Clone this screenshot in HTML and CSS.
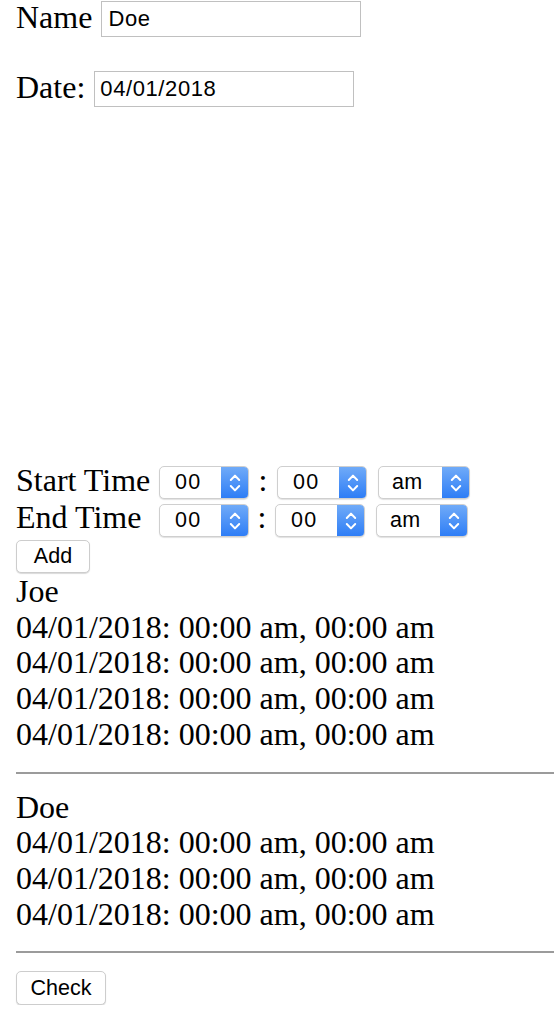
FILE: index.html
```html
<!DOCTYPE html>
<html>
<head>
<meta charset="utf-8">
<link rel="stylesheet" href="styles.css">
</head>
<body>
<div class="page">
  <div class="field name-field">
    <span class="label">Name</span>
    <input class="text-input name-input" type="text" value="Doe">
  </div>
  <div class="field date-field">
    <span class="label">Date:</span>
    <input class="text-input date-input" type="text" value="04/01/2018">
  </div>

  <div class="spacer"></div>

  <div class="time-row start-row">
    <span class="time-label">Start Time</span>
    <div class="select sel-hour"><span class="select-value">00</span><span class="select-arrow"><svg width="28" height="33" viewBox="0 0 28 33"><polyline points="9.8,14 14,9.6 18.2,14" fill="none" stroke="#fff" stroke-width="2" stroke-linecap="round" stroke-linejoin="round"/><polyline points="9.8,20 14,24.4 18.2,20" fill="none" stroke="#fff" stroke-width="2" stroke-linecap="round" stroke-linejoin="round"/></svg></span></div>
    <span class="colon">:</span>
    <div class="select sel-min"><span class="select-value">00</span><span class="select-arrow"><svg width="28" height="33" viewBox="0 0 28 33"><polyline points="9.8,14 14,9.6 18.2,14" fill="none" stroke="#fff" stroke-width="2" stroke-linecap="round" stroke-linejoin="round"/><polyline points="9.8,20 14,24.4 18.2,20" fill="none" stroke="#fff" stroke-width="2" stroke-linecap="round" stroke-linejoin="round"/></svg></span></div>
    <div class="select sel-ampm"><span class="select-value">am</span><span class="select-arrow"><svg width="28" height="33" viewBox="0 0 28 33"><polyline points="9.8,14 14,9.6 18.2,14" fill="none" stroke="#fff" stroke-width="2" stroke-linecap="round" stroke-linejoin="round"/><polyline points="9.8,20 14,24.4 18.2,20" fill="none" stroke="#fff" stroke-width="2" stroke-linecap="round" stroke-linejoin="round"/></svg></span></div>
  </div>
  <div class="time-row end-row">
    <span class="time-label">End Time</span>
    <div class="select sel-hour"><span class="select-value">00</span><span class="select-arrow"><svg width="28" height="33" viewBox="0 0 28 33"><polyline points="9.8,14 14,9.6 18.2,14" fill="none" stroke="#fff" stroke-width="2" stroke-linecap="round" stroke-linejoin="round"/><polyline points="9.8,20 14,24.4 18.2,20" fill="none" stroke="#fff" stroke-width="2" stroke-linecap="round" stroke-linejoin="round"/></svg></span></div>
    <span class="colon end-colon">:</span>
    <div class="select sel-min"><span class="select-value">00</span><span class="select-arrow"><svg width="28" height="33" viewBox="0 0 28 33"><polyline points="9.8,14 14,9.6 18.2,14" fill="none" stroke="#fff" stroke-width="2" stroke-linecap="round" stroke-linejoin="round"/><polyline points="9.8,20 14,24.4 18.2,20" fill="none" stroke="#fff" stroke-width="2" stroke-linecap="round" stroke-linejoin="round"/></svg></span></div>
    <div class="select sel-ampm"><span class="select-value">am</span><span class="select-arrow"><svg width="28" height="33" viewBox="0 0 28 33"><polyline points="9.8,14 14,9.6 18.2,14" fill="none" stroke="#fff" stroke-width="2" stroke-linecap="round" stroke-linejoin="round"/><polyline points="9.8,20 14,24.4 18.2,20" fill="none" stroke="#fff" stroke-width="2" stroke-linecap="round" stroke-linejoin="round"/></svg></span></div>
  </div>

  <button class="btn add-btn" type="button">Add</button>

  <div class="group">
    <div class="line">Joe</div>
    <div class="line">04/01/2018: 00:00 am, 00:00 am</div>
    <div class="line">04/01/2018: 00:00 am, 00:00 am</div>
    <div class="line">04/01/2018: 00:00 am, 00:00 am</div>
    <div class="line">04/01/2018: 00:00 am, 00:00 am</div>
  </div>
  <hr class="divider">
  <div class="group">
    <div class="line">Doe</div>
    <div class="line">04/01/2018: 00:00 am, 00:00 am</div>
    <div class="line">04/01/2018: 00:00 am, 00:00 am</div>
    <div class="line">04/01/2018: 00:00 am, 00:00 am</div>
  </div>
  <hr class="divider">

  <button class="btn check-btn" type="button">Check</button>
</div>
</body>
</html>
```
FILE: styles.css
```css
html, body {
  margin: 0;
  padding: 0;
  background: #ffffff;
}

.page {
  padding-left: 16px;
  font-family: "Liberation Serif", "Times New Roman", serif;
  font-size: 32px;
  line-height: 35.7px;
  color: #000;
}

.field {
  display: flex;
  align-items: flex-start;
  gap: 9px;
}

.date-field {
  margin-top: 33px;
}

.text-input {
  box-sizing: border-box;
  width: 260px;
  height: 36px;
  margin: 1px 0 0 0;
  padding: 0 5px;
  border: 1px solid #c0c0c0;
  border-radius: 0;
  font-family: "Liberation Sans", Arial, sans-serif;
  font-size: 22px;
  letter-spacing: 0.6px;
  color: #000;
  background: #fff;
  outline: none;
}

.name-input {
  padding-left: 6px;
}

.spacer {
  height: 356px;
}

.time-row {
  display: flex;
  align-items: flex-start;
  height: 37px;
}

.end-row {
  height: 38px;
}

.time-label {
  width: 143px;
  flex: none;
}

.select {
  box-sizing: border-box;
  display: flex;
  height: 33px;
  margin-top: 3px;
  border: 1px solid #cfcfcf;
  border-radius: 5px;
  background: #fff;
  box-shadow: 0 1px 1px rgba(0, 0, 0, 0.12);
  overflow: hidden;
  font-family: "Liberation Sans", Arial, sans-serif;
  font-size: 21.5px;
  line-height: 31px;
}

.end-row .select {
  margin-top: 4px;
}

.sel-hour, .sel-min {
  width: 90px;
}

.sel-ampm {
  width: 92px;
  margin-left: 11px;
}

.select-value {
  flex: 1;
  padding-left: 15px;
  letter-spacing: 1.4px;
}

.sel-ampm .select-value {
  padding-left: 13px;
  letter-spacing: 0.4px;
}

.select-arrow {
  width: 28px;
  flex: none;
  margin: -1px -1px -1px 0;
  height: 33px;
  background: linear-gradient(#72acf8, #2c7cf6);
}

.select-arrow svg {
  display: block;
}

.colon {
  width: 28px;
  text-align: center;
  flex: none;
}

.end-colon {
  width: 26px;
}

.btn {
  display: block;
  box-sizing: border-box;
  margin: 0;
  padding: 0;
  border: 1px solid #cdcdcd;
  border-radius: 5px;
  background: #fff;
  box-shadow: 0 1px 1px rgba(0, 0, 0, 0.15);
  font-family: "Liberation Sans", Arial, sans-serif;
  font-size: 21.5px;
  color: #000;
  text-align: center;
}

.add-btn {
  width: 74px;
  height: 33px;
  margin-top: 2px;
  margin-bottom: 1px;
}

.check-btn {
  width: 90px;
  height: 34px;
  margin-top: 18px;
}

.line {
  white-space: nowrap;
}

.divider {
  border: none;
  height: 2px;
  background: #9b9b9b;
  margin: 19px 0 16px 0;
}
```
